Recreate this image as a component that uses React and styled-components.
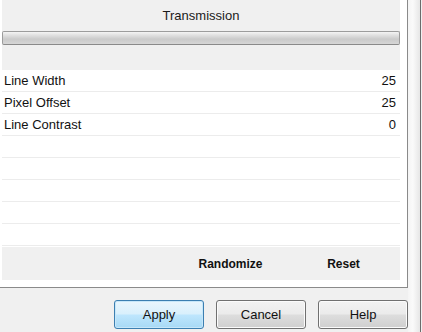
import React from "react";
import styled, { createGlobalStyle } from "styled-components";

const Global = createGlobalStyle`
  html, body { margin: 0; padding: 0; background: #f0f0f0; }
  body { font-family: "Liberation Sans", Arial, sans-serif; }
  #root { width: 422px; height: 332px; overflow: hidden; }
`;

const Window = styled.div`
  width: 422px;
  height: 332px;
  display: grid;
  grid-template-columns: 408px 1fr;
  grid-template-rows: 288px 1fr;
  background: #f0f0f0;
`;

const Panel = styled.div`
  grid-column: 1;
  grid-row: 1;
  background: #ffffff;
  border-right: 1px solid #8a8a8a;
  border-bottom: 1px solid #8a8a8a;
  padding-left: 2px;
  padding-right: 7px;
  display: flex;
  flex-direction: column;
`;

const Side = styled.div`
  grid-column: 2;
  grid-row: 1 / span 2;
  background: linear-gradient(to right, #f4f4f4, #fafafa 40%, #e6e6e6);
  border-right: 1px solid #6c6c6c;
  margin-right: 1px;
`;

const Header = styled.div`
  background: #f0f0f0;
  height: 70px;
  display: flex;
  flex-direction: column;
`;

const Title = styled.div`
  height: 31px;
  display: flex;
  align-items: center;
  justify-content: center;
  font-size: 13px;
  color: #1a1a1a;
  padding-bottom: 1px;
  box-sizing: border-box;
`;

const Bar = styled.div`
  height: 12px;
  border: 1px solid #9c9c9c;
  border-bottom-color: #8a8a8a;
  border-radius: 2px;
  background: linear-gradient(to bottom, #f4f4f4 0%, #dedede 30%, #cacaca 60%, #d6d6d6 100%);
`;

const Rows = styled.div`
  display: flex;
  flex-direction: column;
`;

const Row = styled.div`
  height: 21px;
  border-bottom: 1px solid #ececec;
  display: flex;
  align-items: center;
  justify-content: space-between;
  padding: 0 4px 0 2px;
  font-size: 13px;
  color: #111;
`;

const Actions = styled.div`
  height: 33px;
  background: #f0f0f0;
  display: grid;
  grid-template-columns: 1fr 113px 113px;
  align-items: center;
  margin-top: 1px;
`;

const Action = styled.div`
  grid-column: ${(p) => p.$col};
  text-align: center;
  font-weight: bold;
  font-size: 12px;
  color: #111;
`;

const Footer = styled.div`
  grid-column: 1;
  grid-row: 2;
  display: flex;
  justify-content: flex-end;
  align-items: flex-start;
  gap: 12px;
  padding-top: 12px;
`;

const Button = styled.button`
  width: 90px;
  height: 29px;
  border-radius: 3px;
  font-family: "Liberation Sans", Arial, sans-serif;
  font-size: 13px;
  color: #111;
  border: 1px solid ${(p) => (p.$primary ? "#3c7fb1" : "#707070")};
  background: ${(p) =>
    p.$primary
      ? "linear-gradient(to bottom, #eaf6fd 0%, #d9f0fc 48%, #bee6fd 52%, #a7d9f5 100%)"
      : "linear-gradient(to bottom, #f2f2f2 0%, #ebebeb 48%, #dddddd 52%, #cfcfcf 100%)"};
  box-shadow: inset 0 0 0 1px ${(p) => (p.$primary ? "#c7e7f9" : "#fbfbfb")};
  padding: 0;
  margin: 0;
`;

const rows = [
  ["Line Width", "25"],
  ["Pixel Offset", "25"],
  ["Line Contrast", "0"],
  ["", ""],
  ["", ""],
  ["", ""],
  ["", ""],
  ["", ""],
];

export default function App() {
  return (
    <>
      <Global />
      <Window>
        <Panel>
          <Header>
            <Title>Transmission</Title>
            <Bar />
          </Header>
          <Rows>
            {rows.map(([label, value], i) => (
              <Row key={i}>
                <span>{label}</span>
                <span>{value}</span>
              </Row>
            ))}
          </Rows>
          <Actions>
            <Action $col={2}>Randomize</Action>
            <Action $col={3}>Reset</Action>
          </Actions>
        </Panel>
        <Side />
        <Footer>
          <Button $primary>Apply</Button>
          <Button>Cancel</Button>
          <Button>Help</Button>
        </Footer>
      </Window>
    </>
  );
}
